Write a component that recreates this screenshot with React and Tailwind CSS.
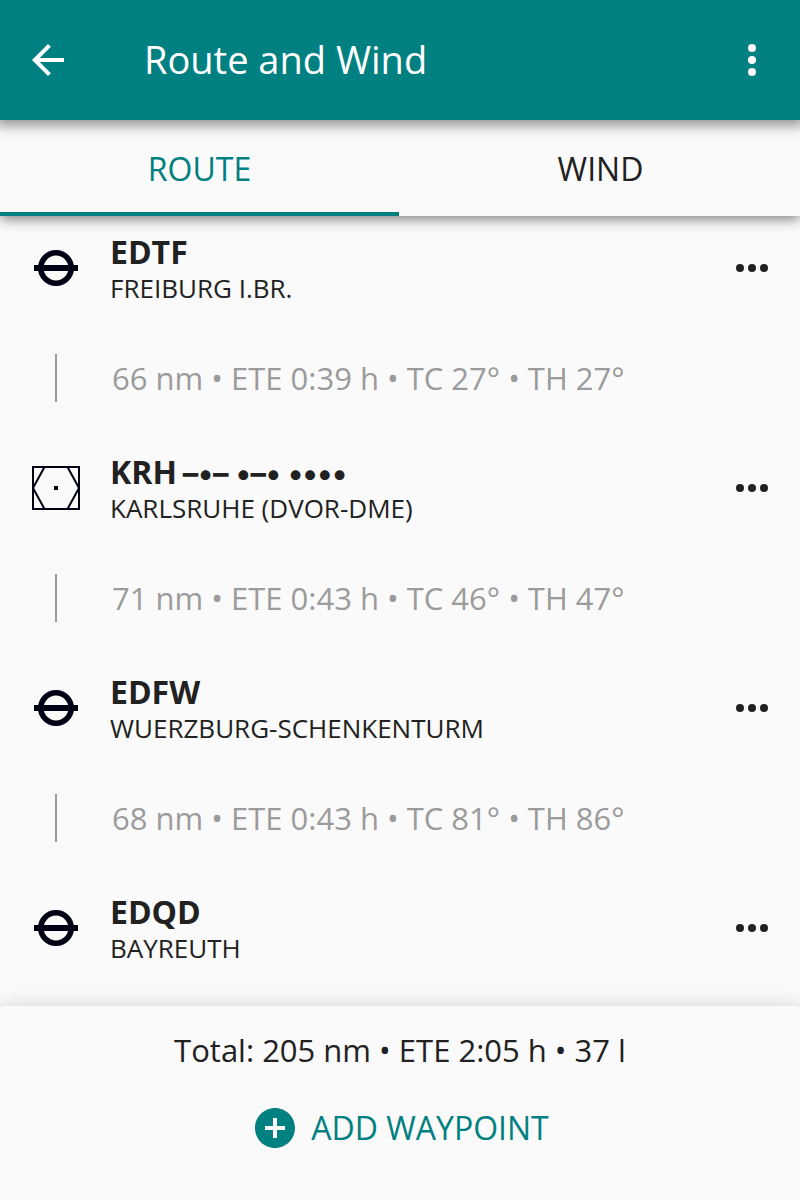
import { useState } from "react";

const waypoints = [
  { kind: "airfield", name: "EDTF", detail: "FREIBURG I.BR.", leg: "66 nm • ETE 0:39 h • TC 27° • TH 27°" },
  { kind: "vor", name: "KRH", morse: "–•– •–• ••••", detail: "KARLSRUHE (DVOR-DME)", leg: "71 nm • ETE 0:43 h • TC 46° • TH 47°" },
  { kind: "airfield", name: "EDFW", detail: "WUERZBURG-SCHENKENTURM", leg: "68 nm • ETE 0:43 h • TC 81° • TH 86°" },
  { kind: "airfield", name: "EDQD", detail: "BAYREUTH" },
];

function AirfieldIcon() {
  return (
    <svg className="size-12 shrink-0" viewBox="0 0 48 48" aria-hidden="true">
      <circle cx="24" cy="24" r="15.2" fill="none" stroke="#000014" strokeWidth="5.6" />
      <rect x="2" y="21" width="44" height="6" fill="#000014" />
    </svg>
  );
}

function VorIcon() {
  return (
    <svg className="size-12 shrink-0" viewBox="0 0 48 48" aria-hidden="true">
      <g fill="none" stroke="#000014" strokeWidth="2">
        <rect x="1" y="3" width="46" height="42" />
        <path d="M12.5 3 1 24l11.5 21M35.5 3 47 24 35.5 45" />
      </g>
      <rect x="22" y="22" width="4" height="4" fill="#000014" />
    </svg>
  );
}

function Dots({ vertical = false }) {
  return (
    <svg className={vertical ? "size-12 rotate-90" : "size-12"} viewBox="0 0 48 48" fill="currentColor" aria-hidden="true">
      <circle cx="12" cy="24" r="4" />
      <circle cx="24" cy="24" r="4" />
      <circle cx="36" cy="24" r="4" />
    </svg>
  );
}

function Waypoint({ point }) {
  return (
    <li>
      <div className="flex h-[104px] items-center pr-6 pl-8">
        {point.kind === "vor" ? <VorIcon /> : <AirfieldIcon />}
        <div className="min-w-0 flex-1 pt-0.5 pl-[30px]">
          <h2 className="flex items-baseline gap-1.5 text-[32px] leading-[38px] font-bold">
            {point.name}
            {point.morse && (
              <span className="font-['Inter',sans-serif] text-[31px] leading-[30px]">{point.morse}</span>
            )}
          </h2>
          <p className="text-[26px] leading-[34px]">{point.detail}</p>
        </div>
        <button type="button" aria-label={`Options for ${point.name}`} className="shrink-0">
          <Dots />
        </button>
      </div>
      {point.leg && (
        <div className="flex h-[116px] items-center px-8 text-[#9b9b9b]">
          <div className="flex w-12 shrink-0 justify-center">
            <div className="h-12 w-0.5 bg-[#9b9b9b]" />
          </div>
          <p className="pl-8 text-[31px] leading-[42px]">{point.leg}</p>
        </div>
      )}
    </li>
  );
}

export default function App() {
  const [tab, setTab] = useState("ROUTE");
  return (
    <div className="flex min-h-screen flex-col overflow-x-clip bg-[#fafafa] font-['Open_Sans',sans-serif] text-[#212121]">
      <header className="z-20 flex h-[120px] items-center bg-[#008080] px-6 text-white shadow-[0_2px_12px_4px_rgba(0,0,0,0.4)]">
        <button type="button" aria-label="Back" className="shrink-0">
          <svg className="size-12" viewBox="0 0 24 24" fill="currentColor" aria-hidden="true">
            <path d="M20 11H7.83l5.59-5.59L12 4l-8 8 8 8 1.41-1.41L7.83 13H20v-2z" />
          </svg>
        </button>
        <h1 className="min-w-0 flex-1 pb-0.5 pl-[72px] text-[38px] leading-[52px]">Route and Wind</h1>
        <button type="button" aria-label="Menu" className="shrink-0">
          <Dots vertical />
        </button>
      </header>
      <div role="tablist" className="z-10 grid h-24 grid-cols-2 gap-0.5 bg-[#fafafa] shadow-[0_3px_12px_rgba(0,0,0,0.5)]">
        {["ROUTE", "WIND"].map((name) => (
          <button
            key={name}
            type="button"
            role="tab"
            aria-selected={tab === name}
            onClick={() => setTab(name)}
            className={
              tab === name
                ? "border-b-4 border-[#008080] pt-1.5 text-[32px] leading-[42px] text-[#008080]"
                : "border-b-4 border-transparent pt-1.5 text-[32px] leading-[42px]"
            }
          >
            {name}
          </button>
        ))}
      </div>
      <main className="flex-1">
        <ul>
          {waypoints.map((point) => (
            <Waypoint key={point.name} point={point} />
          ))}
        </ul>
      </main>
      <footer className="flex flex-col items-center gap-[34px] rounded-[4px] bg-[#fafafa] pt-6 pb-12 shadow-[0_0_20px_rgba(0,0,0,0.16)]">
        <p className="text-[31px] leading-[40px]">Total: 205 nm • ETE 2:05 h • 37 l</p>
        <button type="button" className="flex items-center gap-3 text-[32px] leading-[48px] text-[#008080]">
          <svg className="size-12" viewBox="0 0 24 24" fill="currentColor" aria-hidden="true">
            <path d="M12 2C6.48 2 2 6.48 2 12s4.48 10 10 10 10-4.48 10-10S17.52 2 12 2zm5 11h-4v4h-2v-4H7v-2h4V7h2v4h4v2z" />
          </svg>
          ADD WAYPOINT
        </button>
      </footer>
    </div>
  );
}
